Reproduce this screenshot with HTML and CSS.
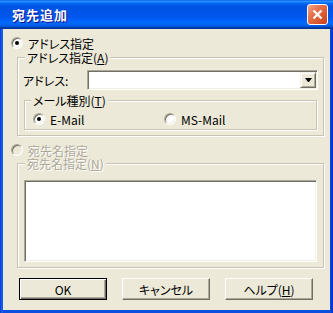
FILE: index.html
```html
<!DOCTYPE html>
<html lang="ja">

<head>
    <meta charset="UTF-8">
    <title>宛先追加</title>
    <link rel="stylesheet" href="styles.css">
</head>

<body>
    <div class="window">
        <div class="titlebar">
            <span class="title">宛先追加</span>
            <button class="close" type="button">
                <svg width="11" height="11" viewBox="0 0 11 11">
                    <path d="M1.5 1.5 L9.5 9.5 M9.5 1.5 L1.5 9.5" stroke="#fff" stroke-width="2.2" fill="none" />
                </svg>
            </button>
        </div>
        <div class="client">
            <label class="option first"><span class="radio checked"></span>アドレス指定</label>
            <div class="group address">
                <span class="group-title">アドレス指定(<u>A</u>)</span>
                <div class="field">
                    <span class="field-label">アドレス:</span>
                    <div class="combo">
                        <span class="combo-btn"><span class="arrow"></span></span>
                    </div>
                </div>
                <div class="group kind">
                    <span class="group-title">メール種別(<u>T</u>)</span>
                    <div class="kind-row">
                        <label class="option"><span class="radio checked"></span>E-Mail</label>
                        <label class="option"><span class="radio"></span>MS-Mail</label>
                    </div>
                </div>
            </div>
            <label class="option second disabled"><span class="radio"></span>宛先名指定</label>
            <div class="group names">
                <span class="group-title disabled">宛先名指定(<u>N</u>)</span>
                <div class="listbox"></div>
            </div>
            <div class="buttons">
                <button class="btn default" type="button">OK</button>
                <button class="btn" type="button">キャンセル</button>
                <button class="btn" type="button">ヘルプ(<u>H</u>)</button>
            </div>
        </div>
    </div>
</body>

</html>
```

FILE: styles.css
```css
body {
    margin: 0;
    font: 12px "Noto Sans CJK JP", "Liberation Sans", sans-serif;
    font-feature-settings: "palt";
    color: #000;
}

.window {
    width: 333px;
    height: 313px;
    display: flex;
    flex-direction: column;
    background: linear-gradient(to right, #0831D9, #166AEE 2px, #0A4FE0 3px, #0A4FE0 330px, #0842C8 331px, #0831D9);
}

.titlebar {
    height: 29px;
    flex: none;
    display: flex;
    align-items: center;
    justify-content: space-between;
    padding: 0 5px 0 12px;
    background: linear-gradient(to bottom, #0058EE 0%, #3593FF 4%, #288EFF 6%, #127DFF 8%, #036FFC 10%, #0262EE 14%, #0057E5 20%, #0054E3 24%, #0055EB 56%, #005BF5 66%, #026AFE 76%, #0062EF 86%, #0052D6 92%, #0040AB 94%, #003092 100%);
}

.title {
    color: #fff;
    font-size: 13px;
    font-weight: bold;
    letter-spacing: 1px;
    text-shadow: 1px 1px #0F1089;
}

.close {
    width: 21px;
    height: 21px;
    padding: 0;
    display: grid;
    place-items: center;
    border: 1px solid #fff;
    border-radius: 3px;
    background: linear-gradient(135deg, #F2A78C 0%, #E5744E 35%, #D9572F 70%, #C4401F 100%);
}

.client {
    flex: 1;
    margin: 0 3px 3px;
    padding: 6px 0 0 8px;
    background: #ECE9D8;
}

.option {
    display: flex;
    align-items: center;
    gap: 5px;
    height: 16px;
    white-space: nowrap;
}

.option.second {
    height: 14px;
    margin-top: 7px;
}

.radio {
    width: 12px;
    height: 12px;
    box-sizing: border-box;
    flex: none;
    display: grid;
    place-items: center;
    border-radius: 50%;
    background: #fff;
    border: 1px solid;
    border-color: #ACA899 #fff #fff #ACA899;
    box-shadow: inset 1px 1px #716F64, inset -1px -1px #F1EFE2;
}

.radio.checked::after {
    content: "";
    width: 4px;
    height: 4px;
    border-radius: 50%;
    background: #000;
}

.disabled {
    color: #ACA899;
    text-shadow: 1px 1px #fff;
}

.disabled .radio {
    background: #ECE9D8;
}

/* etched group box, title sits over the top edge */
.group {
    position: relative;
    margin: 6px 0 0 6px;
    width: 307px;
    box-sizing: border-box;
    border: 1px solid #C7C4B4;
    box-shadow: 1px 1px 0 #fff, inset 1px 1px 0 #fff;
}

.group-title {
    position: absolute;
    top: -7px;
    left: 7px;
    padding: 0 2px;
    line-height: 13px;
    background: #ECE9D8;
    white-space: nowrap;
}

.address {
    padding: 12px 4px 5px 5px;
}

.field {
    display: flex;
    align-items: center;
}

.field-label {
    width: 64px;
}

.combo {
    width: 231px;
    height: 20px;
    box-sizing: border-box;
    display: flex;
    justify-content: flex-end;
    align-items: center;
    padding-right: 1px;
    background: #fff;
    border: 1px solid;
    border-color: #ACA899 #fff #fff #ACA899;
    box-shadow: inset 1px 1px #716F64, inset -1px -1px #F1EFE2;
}

.combo-btn {
    width: 16px;
    height: 16px;
    box-sizing: border-box;
    display: grid;
    place-items: center;
    background: #ECE9D8;
    border: 1px solid;
    border-color: #F1EFE2 #716F64 #716F64 #F1EFE2;
    box-shadow: inset 1px 1px #fff, inset -1px -1px #ACA899;
}

.arrow {
    width: 1px;
    height: 0;
    border-top: 4px solid #000;
    border-left: 3px solid transparent;
    border-right: 3px solid transparent;
}

.kind {
    margin: 10px 0 0 1px;
    width: 293px;
    padding: 10px 4px 2px 8px;
}

.kind .group-title {
    left: 6px;
}

.kind-row {
    display: grid;
    grid-template-columns: 131px auto;
}

.names {
    padding: 16px 5px 5px 6px;
}

.listbox {
    width: 293px;
    height: 82px;
    box-sizing: border-box;
    background: #fff;
    border: 1px solid;
    border-color: #ACA899 #fff #fff #ACA899;
    box-shadow: inset 1px 1px #716F64, inset -1px -1px #F1EFE2;
}

.buttons {
    display: flex;
    gap: 15px;
    margin: 10px 0 0 8px;
}

.btn {
    width: 88px;
    height: 22px;
    padding: 0;
    font: inherit;
    color: #000;
    background: #ECE9D8;
    border: 1px solid;
    border-color: #fff #716F64 #716F64 #fff;
    box-shadow: inset -1px -1px #ACA899;
}

.btn.default {
    border-color: #000;
    box-shadow: inset 1px 1px #fff, inset -1px -1px #716F64, inset -2px -2px #ACA899;
}
```
